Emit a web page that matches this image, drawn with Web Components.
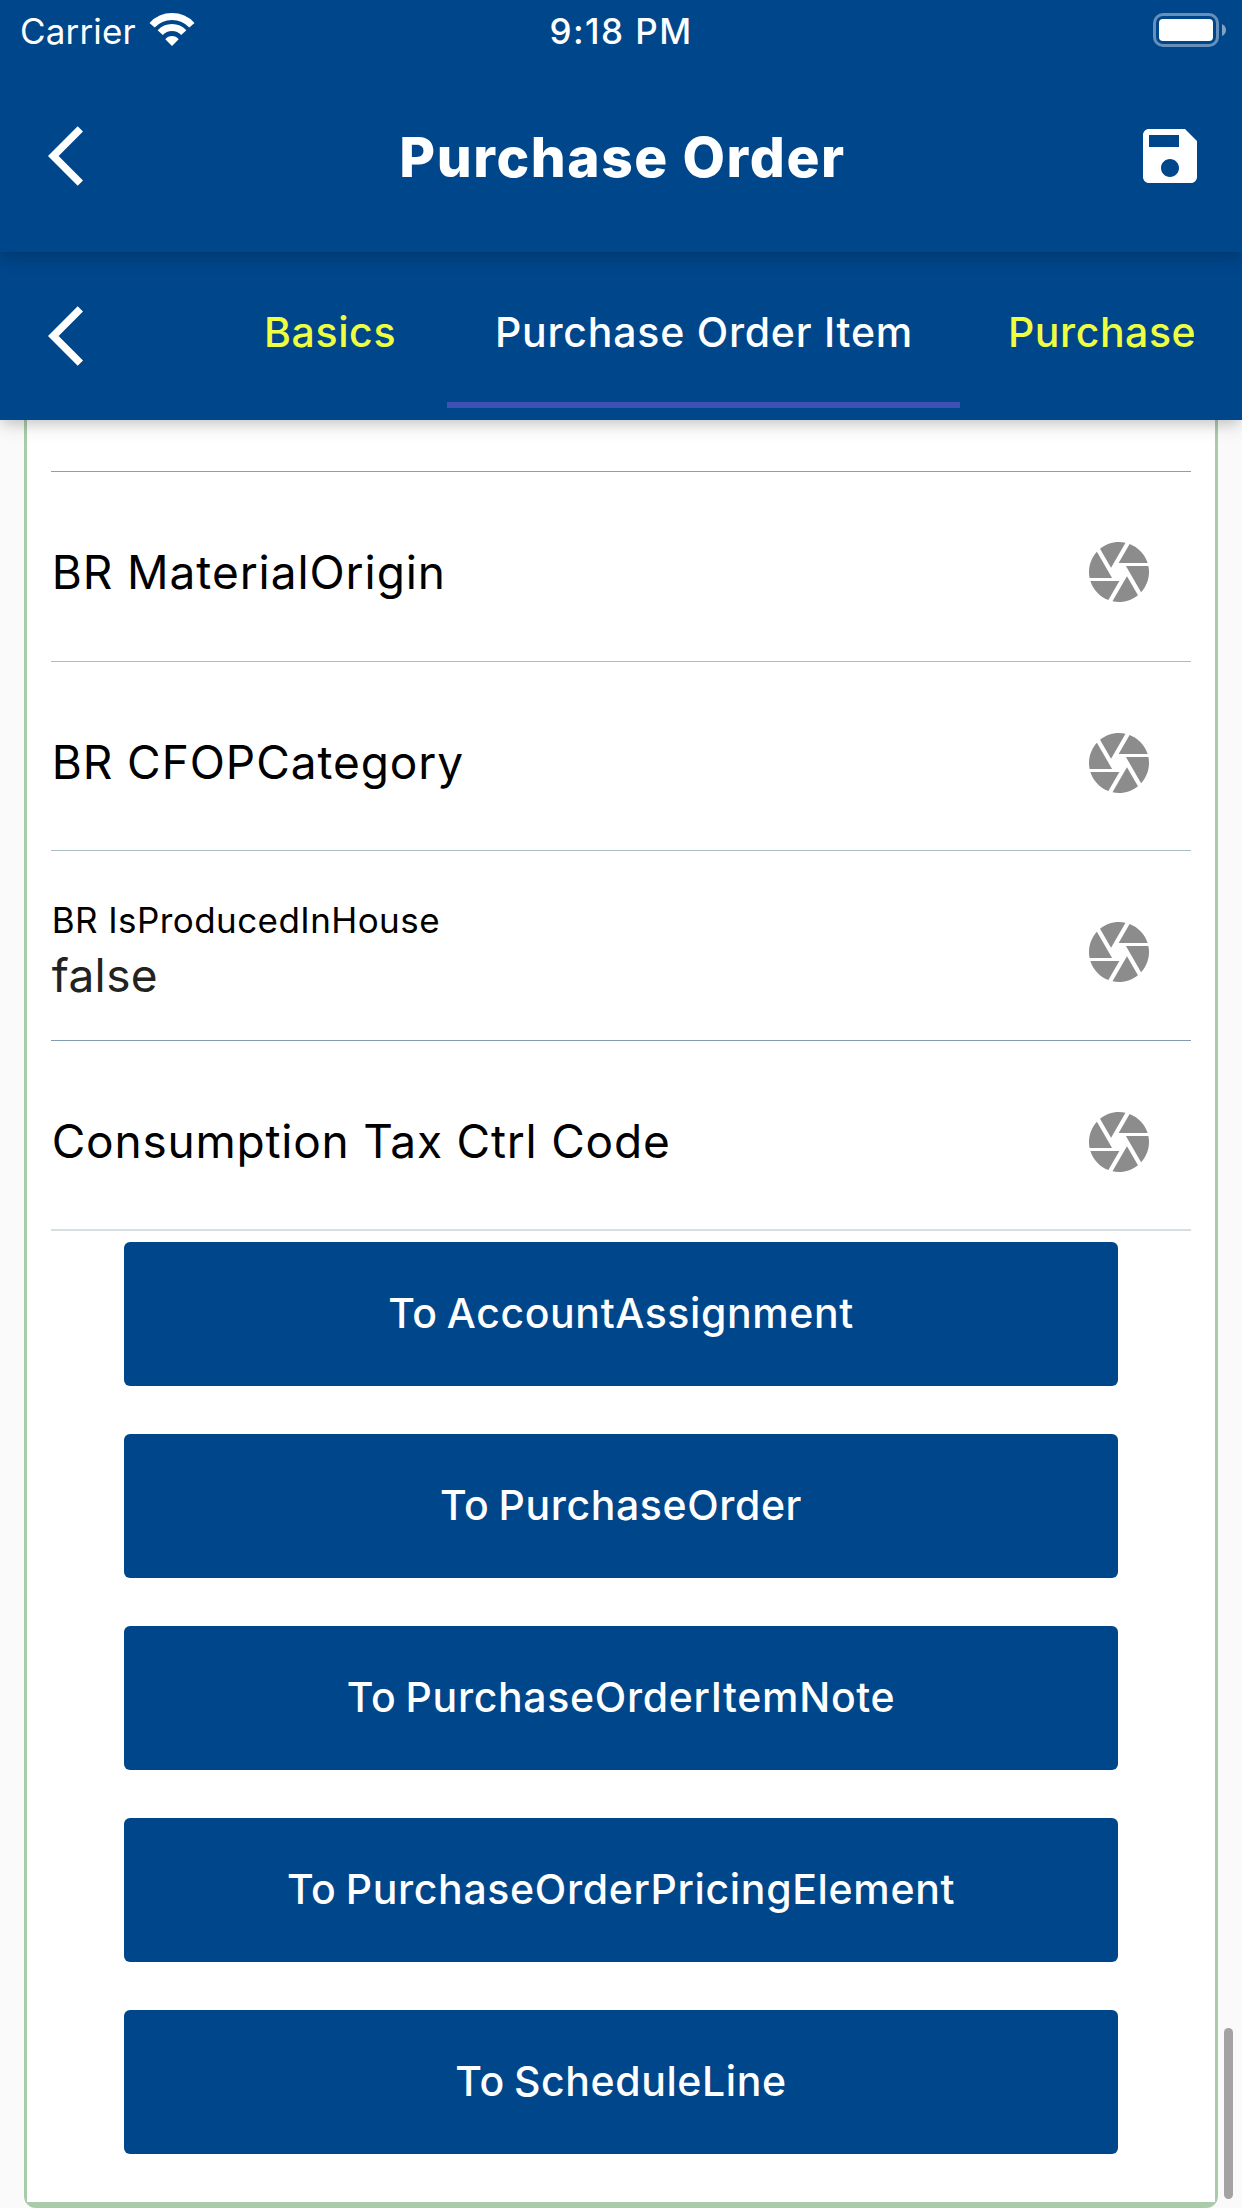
<!DOCTYPE html>
<html lang="en">
<head>
<meta charset="utf-8">
<title>Purchase Order</title>
<style>
  html, body { margin: 0; height: 2208px; overflow: hidden; background: #fafafa; }
  body { font-family: Inter, "Liberation Sans", sans-serif; --brand: #00468b; }
</style>
</head>
<body>
<po-screen>
  <status-bar slot="top" carrier="Carrier" time="9:18 PM"></status-bar>
  <app-bar slot="top">Purchase Order</app-bar>
  <tab-strip slot="tabs">
    <tab-item style="letter-spacing:.62px">Basics</tab-item>
    <tab-item active>Purchase Order Item</tab-item>
    <tab-item style="letter-spacing:.55px">Purchase</tab-item>
  </tab-strip>
  <item-card>
    <field-row style="--line:#b0bbc1;--top:11px">BR MaterialOrigin</field-row>
    <field-row style="--line:#a9bfc4;--h:189px">BR CFOPCategory</field-row>
    <field-row style="--line:#829db3" value="false">BR IsProducedInHouse</field-row>
    <field-row style="--line:#d8dfe2;--w:2px;--track:.78px">Consumption Tax Ctrl Code</field-row>
    <nav-button slot="actions">To AccountAssignment</nav-button>
    <nav-button slot="actions">To PurchaseOrder</nav-button>
    <nav-button slot="actions" style="letter-spacing:.68px">To PurchaseOrderItemNote</nav-button>
    <nav-button slot="actions" style="letter-spacing:.66px">To PurchaseOrderPricingElement</nav-button>
    <nav-button slot="actions">To ScheduleLine</nav-button>
  </item-card>
</po-screen>
<script>
const define = (name, html, setup) => customElements.define(name, class extends HTMLElement {
  connectedCallback() {
    if (this.shadowRoot) return;
    const root = this.attachShadow({ mode: 'open' });
    const t = document.createElement('template');
    t.innerHTML = html;
    root.append(t.content.cloneNode(true));
    if (setup) setup(this, root);
  }
});

define('back-icon', `
  <style>:host{display:block;width:36px;height:72px} svg{display:block}</style>
  <svg width="36" height="72" viewBox="0 0 12 24" fill="#fff"><path d="M11.67 3.87L9.9 2.1 0 12l9.9 9.9 1.77-1.77L3.54 12z"/></svg>`);

define('save-icon', `
  <style>:host{display:block;width:72px;height:72px} svg{display:block}</style>
  <svg width="72" height="72" viewBox="0 0 24 24" fill="#fff"><path d="M17 3H5c-1.11 0-2 .9-2 2v14c0 1.1.89 2 2 2h14c1.1 0 2-.9 2-2V7l-4-4zm-5 16c-1.66 0-3-1.34-3-3s1.34-3 3-3 3 1.34 3 3-1.34 3-3 3zm3-10H5V5h10v4z"/></svg>`);

define('camera-icon', `
  <style>:host{display:block;width:72px;height:72px} svg{display:block}</style>
  <svg width="72" height="72" viewBox="0 0 24 24" fill="#8c8c8c"><path d="M9.4 10.5l4.77-8.26C13.47 2.09 12.75 2 12 2c-2.4 0-4.6.85-6.32 2.25l3.66 6.35.06-.1zM21.54 9c-.92-2.92-3.15-5.26-6-6.34L11.88 9h9.66zm.26 1h-7.49l.29.5 4.76 8.25C21 16.97 22 14.61 22 12c0-.69-.07-1.35-.2-2zM8.54 12l-3.9-6.75C3.01 7.03 2 9.39 2 12c0 .69.07 1.35.2 2h7.49l-1.15-2zm-6.08 3c.92 2.92 3.15 5.26 6 6.34L12.12 15H2.46zm11.27 0l-3.9 6.76c.7.15 1.42.24 2.17.24 2.4 0 4.6-.85 6.32-2.25l-3.66-6.35-.93 1.6z"/></svg>`);

define('status-bar', `
  <style>
    :host{display:grid;grid-template-columns:1fr auto 1fr;height:60px;color:#fff;font-size:35px;line-height:62px}
    .left{display:flex;padding-left:20px;gap:12px}
    .carrier{letter-spacing:.15px}
    .time{font-weight:500;letter-spacing:1.45px}
    .right{display:flex;justify-content:flex-end;padding-right:15px}
    svg{display:block}
  </style>
  <div class="left"><span class="carrier"></span>
    <svg width="48" height="60" viewBox="148 0 48 60">
      <g fill="none" stroke="#fff" stroke-width="7"><path d="M152.1 25.25A27 27 0 0 1 191.9 25.25"/><path d="M160.2 32.7A16 16 0 0 1 183.8 32.7"/></g>
      <path fill="#fff" d="M172 46L165.3 39.3Q168 36 172 36T178.7 39.3Z"/>
    </svg></div>
  <span class="time"></span>
  <div class="right">
    <svg width="74" height="60" viewBox="1153 0 74 60">
      <rect x="1154.5" y="14.5" width="63" height="31" rx="8.5" fill="none" stroke="#fff" stroke-opacity=".4" stroke-width="3"/>
      <rect x="1159" y="19" width="54" height="22" rx="4" fill="#fff"/>
      <path d="M1222 24Q1226 26 1226 30T1222 36Z" fill="#fff" fill-opacity=".5"/>
    </svg></div>`,
  (el, root) => {
    root.querySelector('.carrier').textContent = el.getAttribute('carrier');
    root.querySelector('.time').textContent = el.getAttribute('time');
  });

define('app-bar', `
  <style>
    :host{display:grid;grid-template-columns:1fr auto 1fr;align-items:center;height:192px;color:#fff}
    back-icon{margin-left:48px}
    save-icon{justify-self:end;margin-right:36px}
    h1{margin:0;padding:1px 0 0 3px;font-size:55px;font-weight:800;letter-spacing:1.58px;line-height:72px}
  </style>
  <back-icon></back-icon><h1><slot></slot></h1><save-icon></save-icon>`);

define('tab-strip', `
  <style>
    :host{display:flex;align-items:center;height:168px;padding-right:48px;box-sizing:border-box}
    back-icon{flex:none;margin-left:48px}
    .tabs{display:flex;flex:1;min-width:0;overflow:hidden;height:100%;margin-left:132px}
  </style>
  <back-icon></back-icon><div class="tabs"><slot></slot></div>`);

define('tab-item', `
  <style>
    :host{display:flex;flex-direction:column;flex:none;box-sizing:border-box;height:156px;font-size:41px;font-weight:500;letter-spacing:.77px;color:#eeff41;white-space:nowrap}
    :host([active]){color:#fff;border-bottom:6px solid #3f51b5;width:513px}
    :host(:first-child){width:231px}
    span{padding:0 48px;line-height:160px}
  </style>
  <span><slot></slot></span>`);

define('field-row', `
  <style>
    :host{display:flex;align-items:center;justify-content:space-between;box-sizing:border-box;height:var(--h,190px);padding:var(--top,13px) 36px 0 0;border-bottom:var(--w,1px) solid var(--line);color:#000;font-size:46px;line-height:55px;letter-spacing:var(--track,.93px)}
    .text{padding-left:.7px}
    .value{display:none}
    :host([value]) .text{padding-bottom:8px}
    :host([value]) .label{font-size:35px;letter-spacing:.43px}
    :host([value]) .value{display:block;color:#222;letter-spacing:.4px}
  </style>
  <div class="text"><div class="label"><slot></slot></div><div class="value"></div></div><camera-icon></camera-icon>`,
  (el, root) => { root.querySelector('.value').textContent = el.getAttribute('value') || ''; });

define('nav-button', `
  <style>
    :host{display:flex;align-items:center;justify-content:center;box-sizing:border-box;height:144px;padding-bottom:2px;border-radius:6px;background:var(--brand);color:#fff;font-size:41px;font-weight:500;letter-spacing:.6px;word-spacing:-2.4px}
  </style>
  <slot></slot>`);

define('item-card', `
  <style>
    :host{display:block;margin:0 24px;padding:0 3px 6px;background:#a9cbaa;border-radius:0 0 12px 12px}
    .body{background:#fff}
    .fields{padding:0 24px}
    .prev{height:51px;border-bottom:1px solid #8f9fa8}
    .actions{display:flex;flex-direction:column;gap:48px;padding:11px 97.2px 48px}
  </style>
  <div class="body"><div class="fields"><div class="prev"></div><slot></slot></div><div class="actions"><slot name="actions"></slot></div></div>`);

define('po-screen', `
  <style>
    :host{display:flex;flex-direction:column;position:relative;width:1242px;height:2208px;overflow:hidden;background:#fafafa}
    header,nav{position:relative;background:var(--brand);box-shadow:0 6px 12px -3px rgba(0,0,0,.12),0 6px 18px rgba(0,0,0,.12)}
    header{z-index:2} nav{z-index:1}
    .thumb{position:absolute;left:1224px;top:2028px;width:9px;height:171px;border-radius:5px;background:#a3a3a3}
  </style>
  <header><slot name="top"></slot></header>
  <nav><slot name="tabs"></slot></nav>
  <main><slot></slot></main>
  <div class="thumb"></div>`);
</script>
</body>
</html>
